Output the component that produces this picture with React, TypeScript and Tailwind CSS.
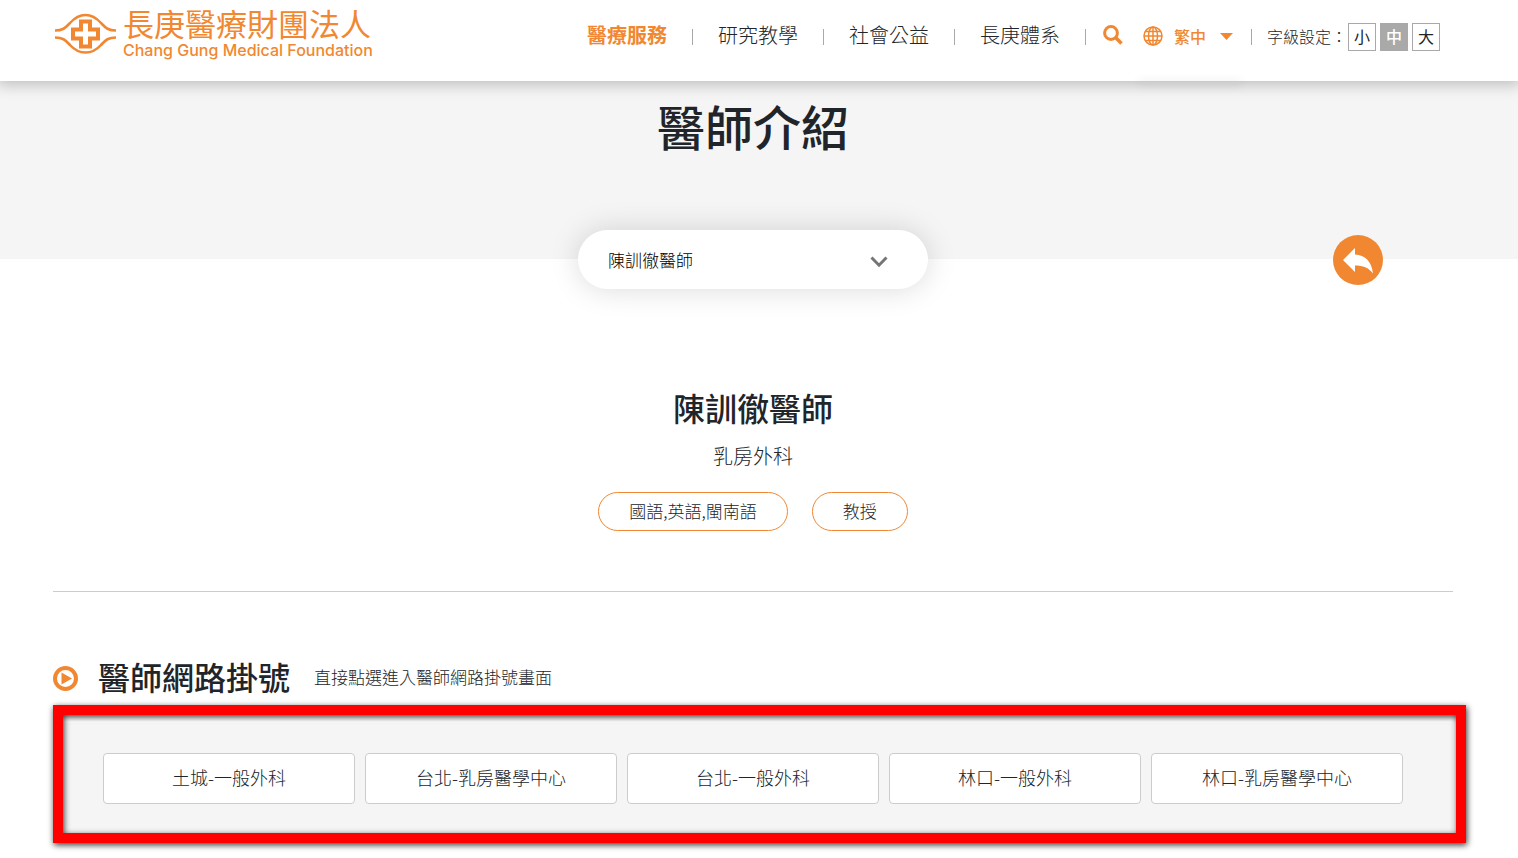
import { useState } from 'react';

const navItems = [
    { name: '醫療服務', href: '#services' },
    { name: '研究教學', href: '#research' },
    { name: '社會公益', href: '#welfare' },
    { name: '長庚體系', href: '#system' },
];

const fontSizes = ['小', '中', '大'];

const clinics = ['土城-一般外科', '台北-乳房醫學中心', '台北-一般外科', '林口-一般外科', '林口-乳房醫學中心'];

function Logo() {
    return (
        <a href="#home" className="flex items-center gap-[7px] text-[#f18831]">
            <svg viewBox="0 0 61 42" className="h-[42px] w-[61px]" fill="none" stroke="currentColor" aria-hidden="true">
                <path d="M0 17.5C9 17.5 11 14 15 10C19.500 5 24 2 30.500 2S41.500 5 46 10C50 14 52 17.500 61 17.500" strokeWidth="2.600" />
                <path d="M0 24.500C9 24.500 11 28 15 32C19.500 37 24 39.500 30.500 39.500S41.500 37 46 32C50 28 52 24.500 61 24.500" strokeWidth="2.600" />
                <path d="M26 8.500H35V16.500H43V25.500H35V33.500H26V25.500H18V16.500H26Z" strokeWidth="4" />
            </svg>
            <span className="flex flex-col">
                <span className="pt-px font-['Liberation_Sans','Noto_Sans_CJK_TC',sans-serif] text-[31px] leading-[30px]">長庚醫療財團法人</span>
                <span className="mt-px whitespace-nowrap font-['Inter'] text-base font-medium leading-4">Chang Gung Medical Foundation</span>
            </span>
        </a>
    );
}

function Header() {
    const [fontSize, setFontSize] = useState('中');

    return (
        <header className="relative z-10 bg-white pr-3 shadow-[0_0_15px_3px_rgba(0,0,0,0.25)]">
            <div className="mx-auto flex h-[81px] w-full max-w-[1400px] items-start justify-between pl-[2px] pr-[13px]">
                <div className="pt-[10px]">
                    <Logo />
                </div>

                <div className="flex h-[74px] items-center">
                    <nav className="flex items-center">
                        {navItems.map((item, index) => (
                            <div key={item.name} className="flex items-center">
                                <a
                                    href={item.href}
                                    className={`px-[25px] pb-1 text-xl leading-[30px] ${index === 0 ? 'font-bold text-[#f18831]' : 'font-light text-[#212529]'}`}
                                >
                                    {item.name}
                                </a>
                                <span className="h-4 w-px bg-[#a9a9a9]" />
                            </div>
                        ))}
                    </nav>

                    <button type="button" aria-label="搜尋" className="ml-[17px] pb-1 text-[#f18831]">
                        <svg viewBox="0 0 20 20" className="h-5 w-5" fill="none" stroke="currentColor" aria-hidden="true">
                            <circle cx="8" cy="8" r="6.400" strokeWidth="3" />
                            <path d="M12.800 12.800L18.500 18.500" strokeWidth="3.600" />
                        </svg>
                    </button>

                    <div className="relative ml-5 flex items-center gap-[11px] pb-0.5 text-[#f18831]">
                        <svg viewBox="0 0 20 20" className="h-5 w-5" fill="none" stroke="currentColor" strokeWidth="1.500" aria-hidden="true">
                            <circle cx="10" cy="10" r="9" />
                            <ellipse cx="10" cy="10" rx="4.500" ry="9" />
                            <path d="M10 1V19M1 10H19M2.500 5.500H17.500M2.500 14.500H17.500" />
                        </svg>
                        <select aria-label="語言" className="w-[59px] appearance-none bg-transparent text-base font-medium leading-6">
                            <option>繁中</option>
                            <option>簡中</option>
                            <option>English</option>
                        </select>
                        <svg viewBox="0 0 13 7" className="pointer-events-none absolute right-0 h-[7px] w-[13px]" fill="currentColor" aria-hidden="true">
                            <path d="M0 0H13L6.500 7Z" />
                        </svg>
                        <div className="absolute -left-1 top-[58px] h-px w-[102px] shadow-[0_0_10px_rgba(0,0,0,0.3)]" />
                    </div>

                    <span className="ml-[18px] h-4 w-px bg-[#a9a9a9]" />

                    <div className="ml-[15px] flex items-center gap-1">
                        <span className="-mr-[3px] pb-0.5 text-base font-light leading-6 text-[#212529]">字級設定：</span>
                        {fontSizes.map((size) => (
                            <button
                                key={size}
                                type="button"
                                onClick={() => setFontSize(size)}
                                className={`flex h-7 w-7 items-center justify-center border border-[#a9a9a9] pb-0.5 text-base leading-6 ${
                                    size === fontSize ? 'bg-[#a9a9a9] font-medium text-white' : 'bg-white text-[#212529]'
                                }`}
                            >
                                {size}
                            </button>
                        ))}
                    </div>
                </div>
            </div>
        </header>
    );
}

function Banner() {
    return (
        <section className="bg-[#f5f5f5] pr-3">
            <div className="relative mx-auto flex w-full max-w-[1400px] flex-col items-center pt-2">
                <h1 className="text-5xl font-medium leading-[72px] text-[#212529]">醫師介紹</h1>

                <div className="relative -mb-[30px] mt-[69px] h-[59px] w-[350px] rounded-full bg-white shadow-[0_0_30px_rgba(0,0,0,0.15)]">
                    <select aria-label="醫師" className="h-full w-full appearance-none rounded-full bg-transparent px-[30px] text-[17px] font-light text-black">
                        <option>陳訓徹醫師</option>
                    </select>
                    <svg viewBox="0 0 18 12" className="pointer-events-none absolute right-10 top-[26px] h-3 w-[18px]" fill="none" stroke="#757575" strokeWidth="3" aria-hidden="true">
                        <path d="M1.500 1.500L9 9.200L16.500 1.500" />
                    </svg>
                </div>

                <a href="#back" aria-label="返回" className="absolute -bottom-[26px] right-[70px] h-[50px] w-[50px] rounded-full bg-[#f18831]">
                    <svg viewBox="0 0 50 50" className="h-[50px] w-[50px]" fill="#fff" aria-hidden="true">
                        <path d="M10 25L22 13V19.500C32 20 38.500 26 40 38.500C35.500 32.500 30 30.500 22 30.500V37Z" />
                    </svg>
                </a>
            </div>
        </section>
    );
}

export default function App() {
    return (
        <div className="min-h-screen overflow-x-hidden bg-white font-['Noto_Sans_CJK_TC',sans-serif] text-[#212529]">
            <Header />
            <Banner />

            <main className="pr-3">
                <div className="mx-auto w-full max-w-[1400px]">
                    <section className="flex flex-col items-center border-b border-[#cccccc] pb-[60px] pt-[124px]">
                        <h2 className="text-[32px] font-medium leading-[48px]">陳訓徹醫師</h2>
                        <p className="mt-[10px] text-xl font-light leading-[30px]">乳房外科</p>
                        <div className="mt-[21px] flex gap-6 text-[17px] font-light">
                            <span className="flex h-[39px] items-center rounded-full border border-[#f18831] px-[30px] pb-0.5">國語,英語,閩南語</span>
                            <span className="flex h-[39px] items-center rounded-full border border-[#f18831] px-[30px] pb-0.5">教授</span>
                        </div>
                    </section>

                    <section className="pb-6 pt-[60px]">
                        <div className="flex items-center">
                            <svg viewBox="0 0 25 25" className="h-[25px] w-[25px]" aria-hidden="true">
                                <circle cx="12.500" cy="12.500" r="10.500" fill="none" stroke="#f18831" strokeWidth="4" />
                                <path d="M8.500 6.500L19 12.500L8.500 18.500Z" fill="#f18831" />
                            </svg>
                            <h2 className="ml-5 pb-1 text-[32px] font-medium leading-[48px]">醫師網路掛號</h2>
                            <p className="ml-6 pb-0.5 text-[17px] font-light leading-6">直接點選進入醫師網路掛號畫面</p>
                        </div>

                        <div className="relative mt-[19px] bg-[#f5f5f5] px-[50px] py-[30px]">
                            <div className="grid grid-cols-5 gap-[10px]">
                                {clinics.map((clinic) => (
                                    <a
                                        key={clinic}
                                        href="#register"
                                        className="flex h-[51px] items-center justify-center rounded border border-[#cccccc] bg-white pb-1 text-lg font-light"
                                    >
                                        {clinic}
                                    </a>
                                ))}
                            </div>
                            {/* highlight frame */}
                            <div className="pointer-events-none absolute -bottom-[9px] -right-[13px] -top-[18px] left-0 border-10 border-[#ff0000] drop-shadow-[1px_2px_3px_rgba(0,0,0,0.8)]" />
                        </div>
                    </section>
                </div>
            </main>
        </div>
    );
}
